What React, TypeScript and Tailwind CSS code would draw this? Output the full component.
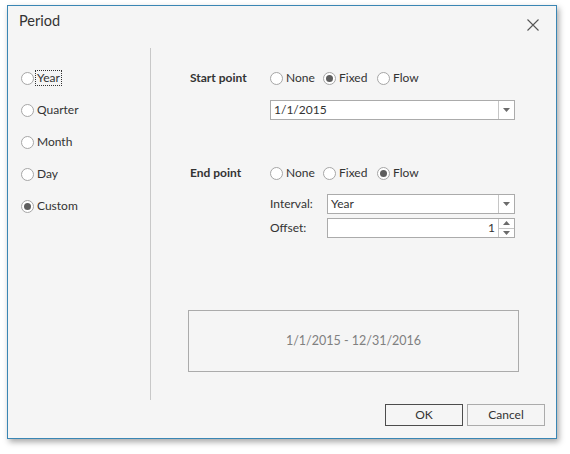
import React from "react";

const FONT = "font-['Lato','Noto_Sans',sans-serif]";

function Radio({ checked, label, w }: { checked?: boolean; label: string; w?: string }) {
  return (
    <div className={`flex items-center gap-[3px] ${w ?? ""}`}>
      <span className="w-[13px] h-[13px] rounded-full border border-[#a6a6a6] bg-white flex items-center justify-center shrink-0">
        {checked && <span className="w-[7px] h-[7px] rounded-full bg-[#5e5e5e]" />}
      </span>
      <span className="text-[#333] leading-none">{label}</span>
    </div>
  );
}

function DropArrow() {
  return (
    <div className="w-[16px] h-full border-l border-[#c6c6c6] flex items-center justify-center">
      <svg width="7" height="4" viewBox="0 0 7 4">
        <path d="M0 0h7L3.5 4z" fill="#6b6b6b" />
      </svg>
    </div>
  );
}

export default function App() {
  return (
    <div className={`w-[570px] h-[454px] bg-white pt-[5px] pl-[7px] text-[12px] ${FONT}`}>
      <div className="w-[550px] h-[434px] bg-[#f5f5f5] border border-[#3a86b4] shadow-[2px_3px_6px_rgba(0,0,0,0.35)] flex flex-col">
        {/* title */}
        <div className="h-[42px] flex items-start justify-between pl-[11px] pr-[17px] pt-[4px]">
          <span className="text-[14.5px] text-[#333] leading-[22px]">Period</span>
          <svg width="12" height="12" viewBox="0 0 12 12" className="mt-[9px]">
            <path d="M0.5 0.5l11 11M11.5 0.5l-11 11" stroke="#555" strokeWidth="1.1" />
          </svg>
        </div>

        {/* body */}
        <div className="h-[352px] flex">
          <div className="w-[142px] pl-[13px] pt-[14px] flex flex-col">
            <div className="h-[32px] flex items-center gap-[3px]">
              <span className="w-[13px] h-[13px] rounded-full border border-[#a6a6a6] bg-white" />
              <span className="text-[#333] leading-[14px] outline outline-1 outline-dotted outline-[#333] px-px -ml-px">Year</span>
            </div>
            <div className="h-[32px] flex items-center"><Radio label="Quarter" /></div>
            <div className="h-[32px] flex items-center"><Radio label="Month" /></div>
            <div className="h-[32px] flex items-center"><Radio label="Day" /></div>
            <div className="h-[32px] flex items-center"><Radio checked label="Custom" /></div>
          </div>
          <div className="w-px bg-[#c8c8c8]" />
          <div className="flex-1 pl-[37px] pt-[20px] flex flex-col">
            <div className="h-[20px] flex items-center">
              <span className="w-[82px] pl-[2px] font-bold text-[#333]">Start point</span>
              <Radio label="None" w="w-[53px]" />
              <Radio checked label="Fixed" w="w-[54px]" />
              <Radio label="Flow" />
            </div>
            <div className="ml-[82px] mt-[12px] w-[245px] h-[20px] bg-white border border-[#ababab] flex items-center justify-between">
              <span className="pl-[3px] text-[#333]">1/1/2015</span>
              <DropArrow />
            </div>

            <div className="h-[20px] mt-[43px] flex items-center">
              <span className="w-[82px] pl-[2px] font-bold text-[#333]">End point</span>
              <Radio label="None" w="w-[53px]" />
              <Radio label="Fixed" w="w-[54px]" />
              <Radio checked label="Flow" />
            </div>
            <div className="mt-[11px] h-[20px] flex items-center">
              <span className="ml-[82px] w-[57px] text-[#333]">Interval:</span>
              <div className="w-[188px] h-[20px] bg-white border border-[#ababab] flex items-center justify-between">
                <span className="pl-[3px] text-[#333]">Year</span>
                <DropArrow />
              </div>
            </div>
            <div className="mt-[4px] h-[20px] flex items-center">
              <span className="ml-[82px] w-[57px] text-[#333]">Offset:</span>
              <div className="w-[188px] h-[20px] bg-white border border-[#ababab] flex items-center justify-end">
                <span className="pr-[3px] text-[#333]">1</span>
                <div className="w-[16px] h-full border-l border-[#c6c6c6] flex flex-col">
                  <div className="flex-1 flex items-center justify-center border-b border-[#c6c6c6]">
                    <svg width="7" height="4" viewBox="0 0 7 4"><path d="M0 4h7L3.5 0z" fill="#6b6b6b" /></svg>
                  </div>
                  <div className="flex-1 flex items-center justify-center">
                    <svg width="7" height="4" viewBox="0 0 7 4"><path d="M0 0h7L3.5 4z" fill="#6b6b6b" /></svg>
                  </div>
                </div>
              </div>
            </div>

            <div className="mt-[72px] w-[331px] h-[62px] border border-[#ababab] flex items-center justify-center">
              <span className="text-[12.5px] text-[#808080] pt-px">1/1/2015 - 12/31/2016</span>
            </div>
          </div>
        </div>

        {/* footer */}
        <div className="flex justify-end gap-[4px] pt-[4px] pr-[11px]">
          <button className="w-[78px] h-[22px] border border-[#4d4d4d] bg-[#f5f5f5] text-[#333] text-[12px]">OK</button>
          <button className="w-[78px] h-[22px] border border-[#ababab] bg-[#f5f5f5] text-[#333] text-[12px]">Cancel</button>
        </div>
      </div>
    </div>
  );
}
